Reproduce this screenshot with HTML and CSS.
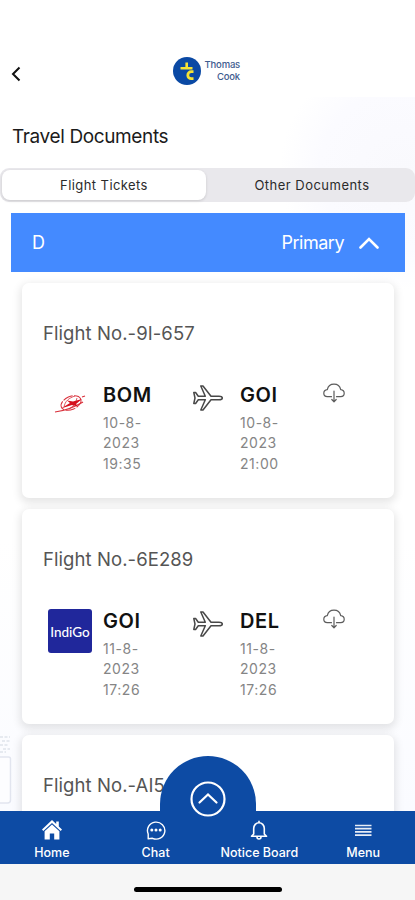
FILE: index.html
```html
<!DOCTYPE html>
<html lang="en">
<head>
<meta charset="utf-8">
<title>Travel Documents</title>
<link rel="stylesheet" href="styles.css">
</head>
<body>
<svg class="defs" width="0" height="0" aria-hidden="true">
  <symbol id="plane" viewBox="0 0 30 26">
    <path d="M.8 7.500H2.600L5.300 11.200H12.300L7.800 1H10L18 11.200H26C28.200 11.200 29.300 12 29.300 13S28.200 14.800 26 14.800H18L10 25H7.800L12.300 14.800H5.300L2.600 18.500H.8L2 13z" fill="none" stroke="#484848" stroke-width="1.500" stroke-linejoin="round"/>
  </symbol>
  <symbol id="cloud" viewBox="0 0 22 20">
    <path d="M8.500 13.700H4.300C2.200 13.500.8 12 .8 10.200S2 7 4.300 6.700C5 3.500 7.700 1.200 11 1.200s6 2.300 6.700 5.500c2.300.3 3.500 1.700 3.500 3.500s-1.400 3.300-3.500 3.500h-4.200M11 8v10.500M8.800 16.500 11 18.800l2.200-2.300" fill="none" stroke="#5c5c5c" stroke-width="1.200" stroke-linecap="round" stroke-linejoin="round"/>
  </symbol>
</svg>
<div class="phone">
  <header class="topbar">
    <svg class="back" viewBox="0 0 10 16"><path d="M8.500 1.500 2 8l6.500 6.500" fill="none" stroke="#111" stroke-width="2"/></svg>
    <div class="brand">
      <svg class="brand-mark" viewBox="0 0 28 28"><circle cx="14" cy="14" r="14" fill="#0a49a4"/><path d="M13.700 5.500v7M7.500 11.300h5M14.500 11.300h5" fill="none" stroke="#f5e334" stroke-width="2.600"/><path d="M20.500 14.700h-2.200a3.500 3.500 0 0 0 0 7h2.200" fill="none" stroke="#f5e334" stroke-width="2.800"/></svg>
      <div class="brand-name"><span>Thomas</span><span>Cook</span></div>
    </div>
  </header>
  <h1 class="title">Travel Documents</h1>
  <div class="tabs">
    <div class="tab active">Flight Tickets</div>
    <div class="tab other">Other Documents</div>
  </div>
  <div class="accordion">
    <span class="initial">D</span>
    <span class="primary">Primary</span>
    <svg class="chev" viewBox="0 0 20 12"><path d="M1.500 10.500 10 2l8.500 8.500" fill="none" stroke="#fff" stroke-width="2.600" stroke-linecap="round"/></svg>
  </div>
  <main class="list">
    <section class="card">
      <div class="flight">Flight No.-9I-657</div>
      <div class="route">
        <svg class="airline" viewBox="0 0 44 44"><g fill="none" stroke="#d9303b"><ellipse cx="23" cy="20" rx="10.500" ry="6.500" transform="rotate(-24 23 20)" stroke-width="1" stroke-dasharray="10 1.500"/><path d="M16 24c1-6 5-9 11-11M21 26c4-2 7-6 8-11" stroke-width=".8"/><path d="M7 29c8-1 18-4 28-10" stroke-width="1.200"/><path d="M34 14l3-1" stroke-width="1.200"/></g><path d="M13 25.500 22 20l-3-2.500 6 1L34 16l-6 5 2 2.500-6-1.500z" fill="#d5101d"/></svg>
        <div class="stop"><b>BOM</b><p>10-8-<br>2023<br>19:35</p></div>
        <svg class="plane"><use href="#plane"/></svg>
        <div class="stop"><b>GOI</b><p>10-8-<br>2023<br>21:00</p></div>
        <svg class="cloud"><use href="#cloud"/></svg>
      </div>
    </section>
    <section class="card">
      <div class="flight">Flight No.-6E289</div>
      <div class="route">
        <div class="airline indigo">IndiGo</div>
        <div class="stop"><b>GOI</b><p>11-8-<br>2023<br>17:26</p></div>
        <svg class="plane"><use href="#plane"/></svg>
        <div class="stop"><b>DEL</b><p>11-8-<br>2023<br>17:26</p></div>
        <svg class="cloud"><use href="#cloud"/></svg>
      </div>
    </section>
    <section class="card">
      <div class="flight">Flight No.-AI5</div>
    </section>
    <svg class="sketch" viewBox="0 0 12 70"><path d="M0 2h10M2 6h8M0 10h9M3 14h7M0 17h6" stroke="#dfe3ec" stroke-width="1.500" stroke-dasharray="3 1.500"/><path d="M-3 22h11.500q2 0 2 2v41q0 3-3 3H-3" fill="#fdfdff" stroke="#e2e5ef" stroke-width="1.500"/></svg>
  </main>
  <nav class="nav">
    <div class="bump"><svg viewBox="0 0 36 36"><circle cx="18" cy="18" r="16.500" fill="none" stroke="#fff" stroke-width="2.200"/><path d="M9.500 21.500 18 13.500l8.500 8" fill="none" stroke="#fff" stroke-width="2.200" stroke-linecap="round"/></svg></div>
    <div class="item"><svg viewBox="0 0 20 20"><path d="M10 0 0 9.600 1.300 11 10 3l8.700 8L20 9.600 16.800 6.500V1.500h-2.600V4z" fill="#fff"/><path d="M10 4.500 2.600 11.300v8.200h5.200v-6h4.400v6h5.200v-8.200z" fill="#fff"/></svg><span>Home</span></div>
    <div class="item"><svg viewBox="0 0 20 20"><path d="M2.200 18.800V14A8.700 8.500 0 1 1 6.500 18.300z" fill="none" stroke="#fff" stroke-width="1.400" stroke-linejoin="round"/><g fill="#fff"><circle cx="5.800" cy="10" r="1.500"/><circle cx="10" cy="10" r="1.500"/><circle cx="14.200" cy="10" r="1.500"/></g></svg><span>Chat</span></div>
    <div class="item"><svg viewBox="0 0 20 20"><path d="M10 .700v2M4.700 14V8.500a5.300 5.800 0 0 1 10.600 0V14l2.200 2.300H2.500zM8 17a2 2 0 0 0 4 0" fill="none" stroke="#fff" stroke-width="1.600" stroke-linejoin="round"/></svg><span>Notice Board</span></div>
    <div class="item"><svg viewBox="0 0 20 20"><path d="M2 5.500h16.500M2 8.700h16.500M2 11.900h16.500M2 15.100h16.500" stroke="#fff" stroke-width="1.700" opacity=".9"/></svg><span>Menu</span></div>
  </nav>
  <footer class="foot"><div class="homebar"></div></footer>
</div>
</body>
</html>
```
FILE: styles.css
```css
* { box-sizing: border-box; }
body { margin: 0; font-family: Inter, "Liberation Sans", sans-serif; }
.defs { display: block; height: 0; }
.phone { width: 415px; height: 900px; overflow: hidden; display: flex; flex-direction: column; background: radial-gradient(circle at 400px 170px, #f9f9fd 0, #fbfbff 80px, rgba(255,255,255,0) 120px), linear-gradient(#fff 60%, #fafbff 90%); }
.topbar { height: 97px; padding: 45px 0 0 11px; display: flex; align-items: center; flex: none; background: #fff; }
.back { width: 10px; height: 16px; margin-top: 6px; }
.brand { display: flex; align-items: center; gap: 4px; margin-left: 152px; }
.brand-mark { width: 28px; height: 28px; }
.brand-name { width: 35px; display: flex; flex-direction: column; align-items: flex-end; gap: 0; font: 500 9.500px/12px Inter, sans-serif; letter-spacing: -.2px; color: #3f5d8f; white-space: nowrap; }
.title { margin: 26px 0 0 12px; font-size: 19px; line-height: 27px; font-weight: 400; letter-spacing: -.38px; color: #1b1b1b; flex: none; }
.tabs { height: 34px; margin-top: 18px; padding: 2px; border-radius: 9px; background: #e9e8ec; display: flex; flex: none; }
.tab { flex: 1; padding-bottom: 1px; display: flex; align-items: center; justify-content: center; font-size: 13px; letter-spacing: .42px; color: #2b2b2b; }
.tab.other { padding-left: 5px; letter-spacing: .48px; }
.tab.active { flex: 0 0 204px; background: #fff; border-radius: 8px; box-shadow: 0 1px 3px rgba(0,0,0,.14); }
.accordion { height: 59px; margin: 11px 10px 0 11px; padding: 0 26px 0 21px; flex: none; background: #448aff; color: #fff; display: flex; align-items: center; font-size: 18px; }
.primary { margin-left: auto; letter-spacing: -.5px; }
.chev { width: 20px; height: 12px; margin-left: 15px; }
.list { position: relative; flex: 1; min-height: 0; overflow: hidden; padding: 11px 21px 0 22px; display: flex; flex-direction: column; gap: 11px; }
.card { flex: none; height: 215px; padding: 35px 21px 0; border-radius: 7px; background: #fff; box-shadow: 0 3px 9px 2px rgba(0,0,0,.1); }
.flight { font-size: 18.500px; line-height: 30px; letter-spacing: .08px; color: #555; }
.route { display: grid; grid-template-columns: 60px 90px 47px 83px 22px; margin-top: 34px; align-items: start; }
.airline { width: 44px; height: 44px; margin: 1px 0 0 5px; }
.indigo { border-radius: 3px; background: #20279b; color: #fff; font: 500 13.500px/46px Lato, sans-serif; text-align: center; }
.stop b { display: block; font-size: 20px; line-height: 27px; font-weight: 600; letter-spacing: .6px; color: #111; }
.stop p { margin: 4px 0 0; font-size: 14px; line-height: 20.300px; letter-spacing: .55px; color: #858585; }
.plane { width: 30px; height: 26px; margin-top: 3px; }
.cloud { width: 22px; height: 20px; margin-top: 1px; }
.sketch { position: absolute; left: 0; top: 463px; width: 12px; height: 70px; }
.nav { position: relative; height: 53px; flex: none; background: #0d4ba4; display: grid; grid-template-columns: repeat(4, 1fr); }
.item { display: flex; flex-direction: column; align-items: center; padding-top: 9px; color: #fff; font-size: 12.500px; font-weight: 500; line-height: 16px; white-space: nowrap; }
.item svg { width: 20px; height: 20px; margin-bottom: 5px; }
.bump { position: absolute; left: 160px; top: -55px; width: 96px; height: 56px; border-radius: 48px 48px 0 0; background: #0d4ba4; }
.bump svg { display: block; width: 36px; height: 36px; margin: 25px auto 0; }
.foot { height: 36px; flex: none; background: #f6f6f6; display: flex; justify-content: center; padding-top: 23px; }
.homebar { width: 148px; height: 5px; border-radius: 3px; background: #000; }
```
